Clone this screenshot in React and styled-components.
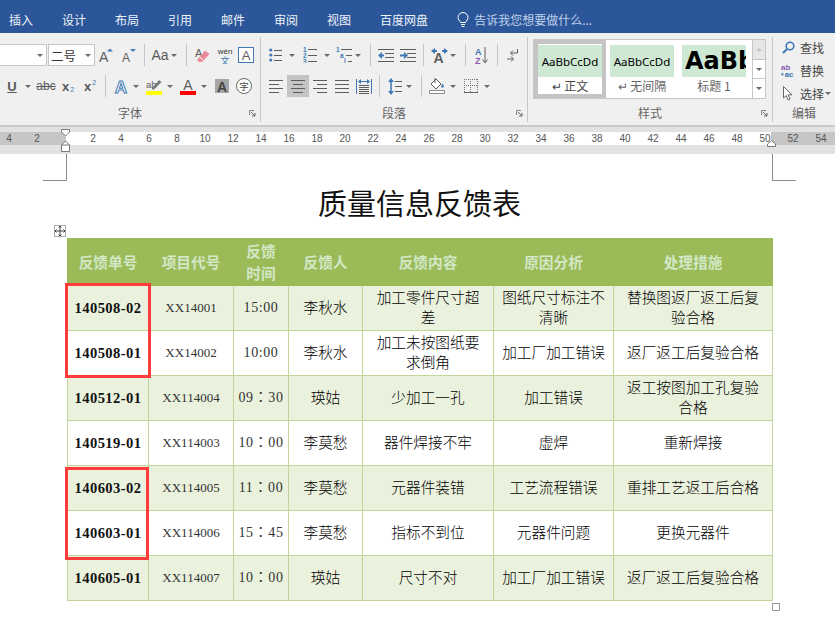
import React from 'react';
import styled, { createGlobalStyle } from 'styled-components';

const GlobalStyle = createGlobalStyle`
  html, body {
    margin: 0;
    padding: 0;
    background: #fff;
    overflow: hidden;
  }
  body {
    font-family: "Noto Sans CJK SC", "Liberation Sans", sans-serif;
  }
`;

const Window = styled.div`
  width: 835px;
  height: 644px;
  overflow: hidden;
  display: flex;
  flex-direction: column;
  background: #fff;
`;

/* 顶部标签栏 */
const TabBar = styled.div`
  height: 33px;
  flex: none;
  box-sizing: border-box;
  background: #2b579a;
  display: flex;
  align-items: center;
  padding: 6px 0 0 9px;
  gap: 29px;
`;

const Tab = styled.span`
  color: #eef2f8;
  font-size: 12px;
  line-height: 27px;
  white-space: nowrap;
`;

const TellMe = styled.div`
  display: flex;
  align-items: center;
  gap: 5px;
  color: #c0d2ea;
  font-size: 12px;
`;

/* 功能区 */
const Ribbon = styled.div`
  height: 94px;
  flex: none;
  box-sizing: border-box;
  background: #f0f0f0;
  border-bottom: 2px solid #c9c9c9;
  display: flex;
  padding-top: 4px;
`;

const Group = styled.div`
  width: ${(p) => p.$w}px;
  height: 85px;
  flex: none;
  box-sizing: border-box;
  border-right: ${(p) => (p.$last ? 'none' : '1px solid #c6c6c6')};
  display: flex;
  flex-direction: column;
`;

const Rows = styled.div`
  padding-top: 7px;
  display: flex;
  flex-direction: column;
  gap: 9px;
  flex: 1;
  min-height: 0;
`;

const Row = styled.div`
  display: flex;
  align-items: center;
  height: 22px;
`;

const GroupLabel = styled.div`
  height: 18px;
  flex: none;
  display: grid;
  grid-template-columns: 1fr auto 1fr;
  align-items: center;
  font-size: 12px;
  color: #666;
  line-height: 18px;
`;

const Launcher = styled.svg`
  grid-column: 3;
  justify-self: end;
  width: 7px;
  height: 7px;
  margin-right: 4px;
`;

const Tool = styled.span`
  width: ${(p) => p.$w}px;
  margin-left: ${(p) => p.$ml || 0}px;
  height: 22px;
  flex: none;
  display: flex;
  align-items: center;
  justify-content: center;
  background: ${(p) => (p.$active ? '#c4c4c4' : 'transparent')};
`;

const Caret = styled.span`
  width: 8px;
  margin-left: ${(p) => p.$ml || 0}px;
  flex: none;
  display: flex;
  justify-content: center;
  &::before {
    content: '';
    border-left: 3px solid transparent;
    border-right: 3px solid transparent;
    border-top: ${(p) => (p.$up ? 'none' : '3px solid #6a6a6a')};
    border-bottom: ${(p) => (p.$up ? '3px solid #c4c4c4' : 'none')};
  }
`;

const Sep = styled.span`
  width: 1px;
  height: 22px;
  flex: none;
  margin-left: ${(p) => p.$ml || 0}px;
  background: #c6c6c6;
`;

const Combo = styled.div`
  width: ${(p) => p.$w}px;
  margin-left: ${(p) => p.$ml || 0}px;
  height: 22px;
  flex: none;
  box-sizing: border-box;
  background: #fff;
  border: 1px solid #c6c6c6;
  border-left: ${(p) => (p.$open ? 'none' : '1px solid #c6c6c6')};
  display: flex;
  align-items: center;
  justify-content: space-between;
  padding: 0 2px;
  font-size: 12.5px;
  color: #333;
`;

const Glyph = styled.span`
  font-family: "Liberation Sans", sans-serif;
  font-size: ${(p) => p.$size || 14}px;
  font-weight: ${(p) => p.$weight || 400};
  color: ${(p) => p.$color || '#5a5a5a'};
  text-decoration: ${(p) => p.$deco || 'none'};
  line-height: 1;
  white-space: nowrap;
  margin: ${(p) => (p.$sup ? '0 0 7px 1px' : p.$sub ? '7px 0 0 1px' : '0')};
`;

/* 样式库 */
const StyleGallery = styled.div`
  width: 233px;
  height: 60px;
  margin: -5px 0 0 5px;
  box-sizing: border-box;
  background: #fff;
  border: 1px solid #c6c6c6;
  display: flex;
`;

const StyleList = styled.div`
  width: 218px;
  flex: none;
  display: flex;
`;

const StyleItem = styled.div`
  width: 72px;
  flex: none;
  box-sizing: border-box;
  border: 4px solid ${(p) => (p.$selected ? '#c4c4c4' : 'transparent')};
  padding-top: 1px;
  display: flex;
  flex-direction: column;
  align-items: center;
`;

const StylePreview = styled.div`
  width: 64px;
  height: 32px;
  flex: none;
  background: #cfe8d3;
  overflow: hidden;
  display: flex;
  align-items: center;
  justify-content: ${(p) => (p.$big ? 'flex-start' : 'center')};
  padding-left: ${(p) => (p.$big ? 3 : 0)}px;
  box-sizing: border-box;
  font-family: ${(p) => (p.$big ? '"DejaVu Sans"' : '"Noto Sans"')}, sans-serif;
  font-size: ${(p) => (p.$big ? 24 : 11.5)}px;
  font-weight: ${(p) => (p.$big ? 700 : 400)};
  color: #000;
  white-space: nowrap;
`;

const StyleName = styled.div`
  font-size: 12px;
  color: ${(p) => (p.$dim ? '#666' : '#444')};
  line-height: 18px;
  white-space: nowrap;
`;

const Scroller = styled.div`
  flex: 1;
  display: flex;
  flex-direction: column;
  border-left: 1px solid #c6c6c6;
`;

const ScrollBtn = styled.div`
  flex: 1;
  display: flex;
  align-items: center;
  justify-content: center;
  background: ${(p) => (p.$off ? '#e6e6e6' : '#fff')};
  border-top: ${(p) => (p.$first ? 'none' : '1px solid #c6c6c6')};
`;

/* 编辑 */
const EditList = styled.div`
  display: flex;
  flex-direction: column;
  gap: 5px;
  margin-top: -6px;
  padding-left: 8px;
`;

const EditItem = styled.div`
  display: flex;
  align-items: center;
  gap: 5px;
  height: 18px;
  font-size: 12px;
  color: #444;
  white-space: nowrap;
`;

const EditIcon = styled.span`
  width: 14px;
  display: flex;
  justify-content: center;
  flex: none;
`;

/* 标尺 */
const RulerBand = styled.div`
  height: 27px;
  flex: none;
  position: relative;
  background: #e2e2e2;
  padding-top: 5px;
  box-sizing: border-box;
  overflow: hidden;
`;

const RulerBar = styled.div`
  height: 13px;
  display: flex;
  background: linear-gradient(
    to right,
    #c6c6c6 66px,
    #fff 66px,
    #fff 771px,
    #c6c6c6 771px
  );
`;

const RulerNum = styled.span`
  width: 28px;
  flex: none;
  text-align: center;
  font-family: "Liberation Sans", sans-serif;
  font-size: 10px;
  line-height: 13px;
  color: #555;
  &:first-child {
    margin-left: -5px;
  }
`;

const IndentMark = styled.svg`
  position: absolute;
  top: 0;
  left: ${(p) => p.$x}px;
`;

/* 文档页面 */
const Page = styled.div`
  flex: 1;
  background: #fff;
  display: flex;
  flex-direction: column;
`;

const CropRow = styled.div`
  height: 27px;
  flex: none;
  display: flex;
  justify-content: space-between;
  padding: 0 39px 0 43px;
`;

const CropMark = styled.span`
  width: 23px;
  height: 26px;
  border-bottom: 1px solid #8c8c8c;
  border-${(p) => (p.$right ? 'left' : 'right')}: 1px solid #8c8c8c;
`;

const Title = styled.h1`
  margin: 0;
  height: 57px;
  padding: 0 0 15px 4px;
  box-sizing: border-box;
  line-height: 42px;
  text-align: center;
  font-size: 29px;
  font-weight: 400;
  color: #111;
`;

const TableWrap = styled.div`
  position: relative;
  width: 705px;
  margin-left: 67px;
`;

const Table = styled.table`
  width: 705px;
  table-layout: fixed;
  border-collapse: collapse;
  font-size: 14.67px;
  font-weight: 300;
  color: #000;
`;

const HeadCell = styled.th`
  height: 46px;
  padding: 0 8px;
  background: #9bbb59;
  border: 1px solid #9bbb59;
  color: #d3e8c6;
  font-size: 14.67px;
  font-weight: 700;
  line-height: 22px;
  text-align: center;
`;

const BodyRow = styled.tr`
  background: ${(p) => (p.$odd ? '#eaf1dd' : '#fff')};
`;

const Cell = styled.td`
  height: 45px;
  padding: 0 8px 2px;
  box-sizing: border-box;
  border: 1px solid #c2d69b;
  line-height: 20px;
  text-align: center;
`;

const IdCell = styled(Cell)`
  font-family: "Liberation Serif", serif;
  font-size: 14.6px;
  font-weight: 700;
  letter-spacing: 0.4px;
  white-space: nowrap;
  color: #111;
  padding: 0;
`;

const CodeCell = styled(Cell)`
  font-family: "Liberation Serif", serif;
  font-size: 13px;
  font-weight: 400;
  color: #333;
  white-space: nowrap;
  padding: 0;
`;

const TimeCell = styled(Cell)`
  font-family: "Liberation Serif", "Noto Sans CJK TC", serif;
  font-size: 14px;
  font-weight: 400;
  letter-spacing: 0.6px;
  color: #333;
  white-space: nowrap;
  padding: 0;
`;

const RedBox = styled.div`
  position: absolute;
  left: -2px;
  top: ${(p) => p.$top}px;
  width: ${(p) => p.$w}px;
  height: ${(p) => p.$h}px;
  box-sizing: border-box;
  border: 3px solid #ff3b3b;
  pointer-events: none;
`;

const MoveHandle = styled.div`
  position: absolute;
  left: -13px;
  top: -13px;
  width: 12px;
  height: 12px;
  box-sizing: border-box;
  border: 1px solid #aaa;
  background: #fff;
  display: flex;
  align-items: center;
  justify-content: center;
`;

const ResizeHandle = styled.div`
  position: absolute;
  left: 705px;
  bottom: -10px;
  width: 8px;
  height: 8px;
  box-sizing: border-box;
  border: 1px solid #999;
  background: #fff;
`;

const GRAY = '#5c5c5c';
const BLUE = '#3f78b5';

const Lines = ({ w = 14, rows }) => (
  <svg width={w} height="14" viewBox={`0 0 ${w} 14`}>
    {rows.map(([x1, x2, y], i) => (
      <path key={i} d={`M${x1} ${y}.5H${x2}`} stroke={GRAY} />
    ))}
  </svg>
);

const Bullets = () => (
  <svg width="13" height="14" viewBox="0 0 13 14">
    {[2, 7, 12].map((y) => (
      <g key={y}>
        <circle cx="1.8" cy={y} r="1.6" fill={BLUE} />
        <path d={`M5 ${y}.5H13`} stroke={GRAY} />
      </g>
    ))}
  </svg>
);

const Numbered = () => (
  <svg width="14" height="16" viewBox="0 0 14 16">
    {['1', '2', '3'].map((n, i) => (
      <g key={n}>
        <text x="0" y={5 + i * 6} fontSize="6.5" fontWeight="700" fill={BLUE} fontFamily="Liberation Sans">{n}</text>
        <path d={`M5 ${2 + i * 6}.5H14`} stroke={GRAY} />
      </g>
    ))}
  </svg>
);

const MultiLevel = () => (
  <svg width="16" height="16" viewBox="0 0 16 16">
    <text x="0" y="5" fontSize="6.5" fontWeight="700" fill={BLUE} fontFamily="Liberation Sans">1</text>
    <path d="M5 2.5H16" stroke={GRAY} />
    <text x="4" y="10.5" fontSize="6.5" fontWeight="700" fill={BLUE} fontFamily="Liberation Sans">a</text>
    <path d="M10 8.5H16" stroke={GRAY} />
    <text x="8" y="16" fontSize="6.5" fontWeight="700" fill={BLUE} fontFamily="Liberation Sans">i</text>
    <path d="M12 14.5H16" stroke={GRAY} />
  </svg>
);

const Indent = ({ flip }) => (
  <svg width="16" height="13" viewBox="0 0 16 13">
    <path d="M0 0.5H16M7 4.5H16M7 8.5H16M0 12.5H16" stroke={GRAY} />
    <path
      d={flip ? 'M0 5.5H4V3L8 6.5L4 10V7.5H0Z' : 'M6 5.5H4V3L0 6.5L4 10V7.5H6Z'}
      fill={BLUE}
    />
  </svg>
);

const Distribute = () => (
  <svg width="16" height="15" viewBox="0 0 16 15">
    <path d="M0.5 0V15M15.5 0V15" stroke={BLUE} />
    <path d="M3 2.5H13" stroke={BLUE} />
    <path d="M5 0L2 2.5L5 5ZM11 0L14 2.5L11 5Z" fill={BLUE} />
    <path d="M3 6.5H13M3 8.5H13M3 10.5H13M3 12.5H13M3 14.5H13" stroke={GRAY} />
  </svg>
);

const LineSpacing = () => (
  <svg width="14" height="17" viewBox="0 0 14 17">
    <path d="M3 3V14" stroke={BLUE} strokeWidth="1.5" />
    <path d="M3 0L6 4H0ZM3 17L6 13H0Z" fill={BLUE} />
    <path d="M7 3.5H14M7 8.5H14M7 13.5H14" stroke={GRAY} />
  </svg>
);

const AsianLayout = () => (
  <svg width="17" height="15" viewBox="0 0 17 15">
    <text x="2.5" y="14.5" fontSize="14" fontWeight="700" fill={GRAY} fontFamily="Liberation Sans">A</text>
    <path d="M0 3L4 0V2H6V4H4V6ZM17 3L13 0V2H11V4H13V6Z" fill={BLUE} />
  </svg>
);

const SortIcon = () => (
  <svg width="13" height="17" viewBox="0 0 13 17">
    <text x="0" y="7.5" fontSize="9" fontWeight="700" fill={BLUE} fontFamily="Liberation Sans">A</text>
    <text x="0" y="16.5" fontSize="9" fontWeight="700" fill="#8a5bb0" fontFamily="Liberation Sans">Z</text>
    <path d="M10 0V15M7.5 12.5L10 16L12.5 12.5" stroke={GRAY} fill="none" />
  </svg>
);

const ParaMark = () => (
  <svg width="11" height="13" viewBox="0 0 11 13">
    <path d="M10.5 0V4H4M6 1.5L3.5 4L6 6.5" stroke={GRAY} fill="none" />
    <path d="M0 10H6M4 7.5L6.5 10L4 12.5" stroke={GRAY} fill="none" />
  </svg>
);

const Shading = () => (
  <svg width="16" height="16" viewBox="0 0 16 16">
    <path d="M7 1L12 6L7 11L2 6Z" fill="#fff" stroke={GRAY} />
    <path d="M6 0V5" stroke={GRAY} />
    <path d="M13.5 5.5Q11 9 13.5 10Q16 9 13.5 5.5Z" fill={BLUE} />
    <path d="M0.5 12.5H15.5V15.5H0.5Z" fill="#fff" stroke="#888" />
  </svg>
);

const Borders = () => (
  <svg width="14" height="14" viewBox="0 0 14 14">
    <path d="M0.5 0V13M6.5 0V13M13.5 0V13M0 0.5H14M0 6.5H14" stroke="#777" strokeDasharray="1 1" fill="none" />
    <path d="M0 13.5H14" stroke="#666" />
  </svg>
);

const GrowFont = ({ up }) => (
  <svg width="14" height="14" viewBox="0 0 14 14">
    <text x="0" y="14" fontSize={up ? 14 : 12} fill={GRAY} fontFamily="Liberation Sans">A</text>
    <path d={up ? 'M8 3.5L11 0.5L14 3.5Z' : 'M8 1L11 4L14 1Z'} fill={BLUE} />
  </svg>
);

const Eraser = () => (
  <svg width="15" height="16" viewBox="0 0 15 16">
    <text x="0" y="10" fontSize="11" fill={GRAY} fontFamily="Liberation Sans">A</text>
    <path d="M10 3.5L14.5 7L7 15H4L2 13Z" fill="#ea8a98" />
    <path d="M5 10L8 13" stroke="#fff" />
  </svg>
);

const PhoneticIcon = () => (
  <svg width="16" height="17" viewBox="0 0 16 17">
    <text x="8" y="7" textAnchor="middle" fontSize="8" fill="#333" fontFamily="Liberation Sans">wén</text>
    <text x="8" y="16.5" textAnchor="middle" fontSize="9" fill={BLUE} fontFamily="Noto Sans CJK SC">文</text>
  </svg>
);

const BoxedA = () => (
  <svg width="16" height="16" viewBox="0 0 16 16">
    <rect x="0.5" y="0.5" width="15" height="15" fill="#fff" stroke={BLUE} />
    <text x="8" y="13" textAnchor="middle" fontSize="13" fill={GRAY} fontFamily="Liberation Sans">A</text>
  </svg>
);

const Effects = () => (
  <svg width="14" height="16" viewBox="0 0 14 16">
    <text x="7" y="14.5" textAnchor="middle" fontSize="17" fontWeight="700" fill="#fff" stroke="#3f78b5" strokeWidth="1" fontFamily="Liberation Sans">A</text>
  </svg>
);

const Highlight = () => (
  <svg width="16" height="17" viewBox="0 0 16 17">
    <text x="0" y="10" fontSize="9.5" fill={GRAY} fontFamily="Liberation Sans">ab</text>
    <path d="M6 10L13 2L15.5 4L8 11.5H6Z" fill="#777" />
    <rect x="0" y="13" width="16" height="4" fill="#ffff00" />
  </svg>
);

const FontColor = () => (
  <svg width="16" height="17" viewBox="0 0 16 17">
    <text x="8" y="12" textAnchor="middle" fontSize="14" fill={GRAY} fontFamily="Liberation Sans">A</text>
    <rect x="0" y="13" width="16" height="4" fill="#ff0000" />
  </svg>
);

const CharShade = () => (
  <svg width="14" height="14" viewBox="0 0 14 14">
    <rect width="14" height="14" fill="#a6a6a6" />
    <text x="7" y="12.5" textAnchor="middle" fontSize="14" fontWeight="700" fill="#444" fontFamily="Liberation Sans">A</text>
  </svg>
);

const Enclosed = () => (
  <svg width="16" height="16" viewBox="0 0 16 16">
    <circle cx="8" cy="8" r="7.5" fill="#fff" stroke="#666" />
    <text x="8" y="11.5" textAnchor="middle" fontSize="9.5" fill="#444" fontFamily="Noto Sans CJK SC">字</text>
  </svg>
);

const Bulb = () => (
  <svg width="12" height="16" viewBox="0 0 12 16">
    <path d="M3.5 10.5C2.5 8.5 1 7.5 1 5.5A5 5 0 0 1 11 5.5C11 7.5 9.5 8.5 8.5 10.5Z" fill="none" stroke="#fff" />
    <path d="M4 12.5H8M4.5 14.5H7.5" stroke="#fff" />
  </svg>
);

const LaunchIcon = () => (
  <Launcher viewBox="0 0 7 7">
    <path d="M0.5 5V0.5H5" stroke="#888" fill="none" />
    <path d="M2 2L6 6M6 3V6H3" stroke="#666" fill="none" />
  </Launcher>
);

const tabs = ['插入', '设计', '布局', '引用', '邮件', '审阅', '视图', '百度网盘'];

const rulerNums = [4, 2, '', 2, 4, 6, 8, 10, 12, 14, 16, 18, 20, 22, 24, 26, 28, 30, 32, 34, 36, 38, 40, 42, 44, 46, 48, 50, 52, 54];

const COL_WIDTHS = [81, 85, 55, 74, 131, 120, 159];
const HEADERS = ['反馈单号', '项目代号', '反馈时间', '反馈人', '反馈内容', '原因分析', '处理措施'];

const rows = [
  ['140508-02', 'XX14001', '15:00', '李秋水', '加工零件尺寸超差', '图纸尺寸标注不清晰', '替换图返厂返工后复验合格'],
  ['140508-01', 'XX14002', '10:00', '李秋水', '加工未按图纸要求倒角', '加工厂加工错误', '返厂返工后复验合格'],
  ['140512-01', 'XX114004', '09：30', '瑛姑', '少加工一孔', '加工错误', '返工按图加工孔复验合格'],
  ['140519-01', 'XX114003', '10：00', '李莫愁', '器件焊接不牢', '虚焊', '重新焊接'],
  ['140603-02', 'XX114005', '11：00', '李莫愁', '元器件装错', '工艺流程错误', '重排工艺返工后合格'],
  ['140603-01', 'XX114006', '15：45', '李莫愁', '指标不到位', '元器件问题', '更换元器件'],
  ['140605-01', 'XX114007', '10：00', '瑛姑', '尺寸不对', '加工厂加工错误', '返厂返工后复验合格'],
];

const App = () => (
  <Window>
    <GlobalStyle />
    <TabBar>
      {tabs.map((t) => (
        <Tab key={t}>{t}</Tab>
      ))}
      <TellMe>
        <Bulb />
        告诉我您想要做什么...
      </TellMe>
    </TabBar>

    <Ribbon>
      <Group $w={261}>
        <Rows>
          <Row>
            <Combo $w={47} $open>
              <span />
              <Caret />
            </Combo>
            <Combo $w={47} $ml={1}>
              二号
              <Caret />
            </Combo>
            <Tool $w={22}><GrowFont up /></Tool>
            <Tool $w={24}><GrowFont /></Tool>
            <Sep $ml={3} />
            <Tool $w={18} $ml={6}><Glyph $size={14}>Aa</Glyph></Tool>
            <Caret $ml={1} />
            <Sep $ml={8} />
            <Tool $w={30}><Eraser /></Tool>
            <Tool $w={16}><PhoneticIcon /></Tool>
            <Tool $w={16} $ml={5}><BoxedA /></Tool>
          </Row>
          <Row>
            <Tool $w={24}><Glyph $size={13} $weight={700} $deco="underline">U</Glyph></Tool>
            <Caret />
            <Tool $w={28}><Glyph $size={12} $deco="line-through">abc</Glyph></Tool>
            <Tool $w={16}>
              <Glyph $size={13} $weight={700}>x</Glyph>
              <Glyph $size={7} $color={BLUE} $sub>2</Glyph>
            </Tool>
            <Tool $w={28}>
              <Glyph $size={13} $weight={700}>x</Glyph>
              <Glyph $size={7} $color={BLUE} $sup>2</Glyph>
            </Tool>
            <Sep $ml={1} />
            <Tool $w={22} $ml={4}><Effects /></Tool>
            <Caret />
            <Tool $w={16} $ml={6}><Highlight /></Tool>
            <Caret $ml={4} />
            <Tool $w={16} $ml={6}><FontColor /></Tool>
            <Caret $ml={4} />
            <Tool $w={14} $ml={7}><CharShade /></Tool>
            <Tool $w={16} $ml={7}><Enclosed /></Tool>
          </Row>
        </Rows>
        <GroupLabel>
          <span />
          字体
          <LaunchIcon />
        </GroupLabel>
      </Group>

      <Group $w={267}>
        <Rows>
          <Row>
            <Tool $w={13} $ml={8}><Bullets /></Tool>
            <Caret $ml={6} />
            <Tool $w={14} $ml={7}><Numbered /></Tool>
            <Caret $ml={6} />
            <Tool $w={16} $ml={5}><MultiLevel /></Tool>
            <Caret $ml={2} />
            <Sep $ml={8} />
            <Tool $w={16} $ml={7}><Indent /></Tool>
            <Tool $w={16} $ml={6}><Indent flip /></Tool>
            <Sep $ml={7} />
            <Tool $w={17} $ml={7}><AsianLayout /></Tool>
            <Caret $ml={1} />
            <Sep $ml={8} />
            <Tool $w={13} $ml={9}><SortIcon /></Tool>
            <Sep $ml={9} />
            <Tool $w={11} $ml={9}><ParaMark /></Tool>
          </Row>
          <Row>
            <Tool $w={14} $ml={8}>
              <Lines rows={[[0, 14, 1], [0, 10, 5], [0, 14, 9], [0, 10, 13]]} />
            </Tool>
            <Tool $w={22} $ml={4} $active>
              <Lines rows={[[0, 14, 1], [2, 12, 5], [0, 14, 9], [2, 12, 13]]} />
            </Tool>
            <Tool $w={14} $ml={4}>
              <Lines rows={[[0, 14, 1], [4, 14, 5], [0, 14, 9], [4, 14, 13]]} />
            </Tool>
            <Tool $w={14} $ml={8}>
              <Lines rows={[[0, 14, 1], [0, 14, 5], [0, 14, 9], [0, 14, 13]]} />
            </Tool>
            <Tool $w={16} $ml={7}><Distribute /></Tool>
            <Sep $ml={7} />
            <Tool $w={14} $ml={8}><LineSpacing /></Tool>
            <Caret $ml={3} />
            <Sep $ml={8} />
            <Tool $w={16} $ml={7}><Shading /></Tool>
            <Caret $ml={4} />
            <Tool $w={14} $ml={7}><Borders /></Tool>
            <Caret $ml={5} />
          </Row>
        </Rows>
        <GroupLabel>
          <span />
          段落
          <LaunchIcon />
        </GroupLabel>
      </Group>

      <Group $w={245}>
        <Rows>
          <StyleGallery>
            <StyleList>
              <StyleItem $selected>
                <StylePreview>AaBbCcDd</StylePreview>
                <StyleName>↵ 正文</StyleName>
              </StyleItem>
              <StyleItem>
                <StylePreview>AaBbCcDd</StylePreview>
                <StyleName $dim>↵ 无间隔</StyleName>
              </StyleItem>
              <StyleItem>
                <StylePreview $big>AaBb</StylePreview>
                <StyleName $dim>标题 1</StyleName>
              </StyleItem>
            </StyleList>
            <Scroller>
              <ScrollBtn $off $first><Caret $up /></ScrollBtn>
              <ScrollBtn><Caret /></ScrollBtn>
              <ScrollBtn><Caret /></ScrollBtn>
            </Scroller>
          </StyleGallery>
        </Rows>
        <GroupLabel>
          <span />
          样式
          <LaunchIcon />
        </GroupLabel>
      </Group>

      <Group $w={62} $last>
        <Rows>
          <EditList>
            <EditItem>
              <EditIcon>
                <svg width="13" height="13" viewBox="0 0 13 13">
                  <circle cx="8" cy="5" r="3.8" fill="none" stroke={BLUE} strokeWidth="1.6" />
                  <path d="M5 8L1 12" stroke={BLUE} strokeWidth="2" />
                </svg>
              </EditIcon>
              查找
            </EditItem>
            <EditItem>
              <EditIcon>
                <svg width="15" height="15" viewBox="0 0 15 15">
                  <text x="0" y="7" fontSize="8.5" fontWeight="700" fill="#8a5bb0" fontFamily="Liberation Sans">ab</text>
                  <text x="4" y="14.5" fontSize="8.5" fontWeight="700" fill={BLUE} fontFamily="Liberation Sans">ac</text>
                  <path d="M0 11.5H3M0.5 11.5L2 10M0.5 11.5L2 13" stroke={BLUE} fill="none" />
                </svg>
              </EditIcon>
              替换
            </EditItem>
            <EditItem>
              <EditIcon>
                <svg width="10" height="15" viewBox="0 0 10 15">
                  <path d="M0.5 0.5V12L3.2 9.5L5 14L7 13L5.2 8.8H9Z" fill="#fff" stroke="#666" />
                </svg>
              </EditIcon>
              选择
              <Caret $ml={-5} />
            </EditItem>
          </EditList>
        </Rows>
        <GroupLabel>
          <span />
          编辑
          <span />
        </GroupLabel>
      </Group>
    </Ribbon>

    <RulerBand>
      <RulerBar>
        {rulerNums.map((n, i) => (
          <RulerNum key={i}>{n}</RulerNum>
        ))}
      </RulerBar>
      <IndentMark $x={61} width="10" height="26" viewBox="0 0 10 26">
        <path d="M0.5 2.5H8.5V5L4.5 9L0.5 5Z" fill="#fff" stroke="#777" />
        <path d="M4.5 14L8.5 18V24.5H0.5V18Z" fill="#fff" stroke="#777" />
        <path d="M0.5 18H8.5" stroke="#777" />
      </IndentMark>
      <IndentMark $x={767} width="10" height="26" viewBox="0 0 10 26">
        <path d="M4.5 13.5L8.5 17V19.5H0.5V17Z" fill="#fff" stroke="#777" />
      </IndentMark>
    </RulerBand>

    <Page>
      <CropRow>
        <CropMark />
        <CropMark $right />
      </CropRow>
      <Title>质量信息反馈表</Title>
      <TableWrap>
        <MoveHandle>
          <svg width="10" height="10" viewBox="0 0 10 10">
            <path d="M5 0V10M0 5H10M3.5 1.5L5 0L6.5 1.5M3.5 8.5L5 10L6.5 8.5M1.5 3.5L0 5L1.5 6.5M8.5 3.5L10 5L8.5 6.5" stroke="#444" fill="none" />
          </svg>
        </MoveHandle>
        <Table>
          <colgroup>
            {COL_WIDTHS.map((w, i) => (
              <col key={i} width={w} />
            ))}
          </colgroup>
          <thead>
            <tr>
              {HEADERS.map((h) => (
                <HeadCell key={h}>{h}</HeadCell>
              ))}
            </tr>
          </thead>
          <tbody>
            {rows.map((r, i) => (
              <BodyRow key={r[0]} $odd={i % 2 === 0}>
                <IdCell>{r[0]}</IdCell>
                <CodeCell>{r[1]}</CodeCell>
                <TimeCell>{r[2]}</TimeCell>
                <Cell>{r[3]}</Cell>
                <Cell>{r[4]}</Cell>
                <Cell>{r[5]}</Cell>
                <Cell>{r[6]}</Cell>
              </BodyRow>
            ))}
          </tbody>
        </Table>
        <RedBox $top={45} $w={86} $h={95} />
        <RedBox $top={229} $w={84} $h={93} />
        <ResizeHandle />
      </TableWrap>
    </Page>
  </Window>
);

export default App;
